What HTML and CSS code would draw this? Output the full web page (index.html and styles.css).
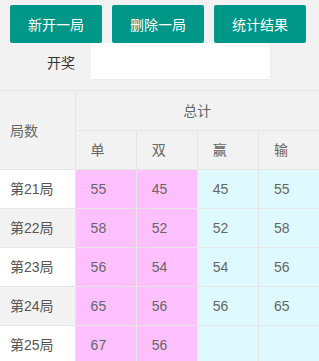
FILE: index.html
```html
<!DOCTYPE HTML>
<html>
<head>
    <meta charset="utf-8">
    <title>开奖统计</title>
    <link rel="stylesheet" href="styles.css">
</head>

<body>
    <div class='toolbar'>
        <button type="button" class="btn">新开一局</button>
        <button type="button" class="btn">删除一局</button>
        <button type="button" class="btn">统计结果</button>
    </div>
    <div class='form-item'>
        <label class='form-label' for="result">开奖</label>
        <input type="text" id="result" class="form-input" value="">
    </div>
    <table class='stat-table'>
        <colgroup>
            <col class='col-round'>
            <col class='col-num'>
            <col class='col-num'>
            <col class='col-num'>
            <col class='col-num'>
        </colgroup>
        <thead>
            <tr class='head-top'>
                <th rowspan="2" class='first'>局数</th>
                <th colspan="4" class='center'>总计</th>
            </tr>
            <tr>
                <th>单</th>
                <th>双</th>
                <th>赢</th>
                <th>输</th>
            </tr>
        </thead>
        <tbody>
            <tr>
                <td class='first'>第21局</td>
                <td class='pink'>55</td><td class='pink'>45</td>
                <td class='cyan'>45</td><td class='cyan'>55</td>
            </tr>
            <tr class='even'>
                <td class='first'>第22局</td>
                <td class='pink'>58</td><td class='pink'>52</td>
                <td class='cyan'>52</td><td class='cyan'>58</td>
            </tr>
            <tr>
                <td class='first'>第23局</td>
                <td class='pink'>56</td><td class='pink'>54</td>
                <td class='cyan'>54</td><td class='cyan'>56</td>
            </tr>
            <tr class='even'>
                <td class='first'>第24局</td>
                <td class='pink'>65</td><td class='pink'>56</td>
                <td class='cyan'>56</td><td class='cyan'>65</td>
            </tr>
            <tr>
                <td class='first'>第25局</td>
                <td class='pink'>67</td><td class='pink'>56</td>
                <td class='cyan'></td><td class='cyan'></td>
            </tr>
        </tbody>
    </table>
</body>
</html>
```

FILE: styles.css
```css
html, body{
    margin: 0;
    background-color: #f2f2f2;
}
body{
    font-family: "Liberation Sans", "Noto Sans CJK SC", sans-serif;
    font-size: 14px;
    color: #666;
    overflow: hidden;
}
.toolbar{
    display: flex;
    gap: 10px;
    padding: 5px 10px 0;
}
.btn{
    height: 38px;
    padding: 0 18px;
    border: none;
    border-radius: 2px;
    background-color: #009688;
    color: #fff;
    font-family: inherit;
    font-size: 14px;
    white-space: nowrap;
}
.form-item{
    display: flex;
    align-items: center;
}
.form-label{
    width: 90px;
    box-sizing: border-box;
    padding-right: 15px;
    text-align: right;
    color: #333;
}
.form-input{
    width: 180px;
    height: 37px;
    margin-left: 1px;
    box-sizing: border-box;
    border: 1px solid #ebebeb;
    border-left: none;
    border-top: none;
    background-color: #fff;
    font-size: 14px;
}
.stat-table{
    width: 320px;
    margin-top: 10px;
    border-collapse: collapse;
    table-layout: fixed;
}
.col-round{
    width: 75px;
}
.col-num{
    width: 61px;
}
.stat-table th, .stat-table td{
    padding: 9px 15px;
    line-height: 20px;
    border: 1px solid #e6e6e6;
    font-weight: normal;
    text-align: left;
    color: #666;
    white-space: nowrap;
}
.stat-table th{
    background-color: #f2f2f2;
}
.stat-table .head-top th{
    padding-top: 10px;
}
.stat-table th.center{
    text-align: center;
}
.stat-table .first{
    padding-left: 10px;
    border-left: none;
}
.stat-table td.first{
    background-color: #fff;
    color: #555;
}
.stat-table tr.even td.first{
    background-color: #f2f2f2;
}
.pink{
    background-color: #ffc0ff;
}
.cyan{
    background-color: #dffaff;
}
```
